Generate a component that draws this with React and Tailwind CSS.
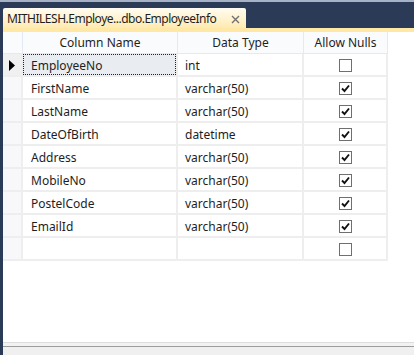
import React from "react";

const rows = [
  { name: "EmployeeNo", type: "int", nulls: false, current: true },
  { name: "FirstName", type: "varchar(50)", nulls: true },
  { name: "LastName", type: "varchar(50)", nulls: true },
  { name: "DateOfBirth", type: "datetime", nulls: true },
  { name: "Address", type: "varchar(50)", nulls: true },
  { name: "MobileNo", type: "varchar(50)", nulls: true },
  { name: "PostelCode", type: "varchar(50)", nulls: true },
  { name: "EmailId", type: "varchar(50)", nulls: true },
  { name: "", type: "", nulls: false },
];

function Check({ checked }) {
  return (
    <div className="w-[13px] h-[13px] border border-[#6f6f6f] bg-white flex items-center justify-center">
      {checked && (
        <svg width="9" height="9" viewBox="0 0 9 9">
          <path d="M1 4.5 L3.5 7 L8 1.5" fill="none" stroke="#111" strokeWidth="1.9" />
        </svg>
      )}
    </div>
  );
}

export default function App() {
  return (
    <div
      className="w-[414px] h-[355px] flex flex-col bg-white overflow-hidden text-[12px] text-[#1e1e1e]"
      style={{ fontFamily: '"Noto Sans", "Open Sans", sans-serif' }}
    >
      <div className="h-[2px] bg-[#a7b1c6]" />
      <div className="flex flex-1 min-h-0">
        <div className="w-[3px] bg-[#2b3a57]" />
        <div className="flex-1 flex flex-col min-w-0">
          <div className="h-[26px] bg-[#2b3a57] flex items-end">
            <div className="h-[20px] w-[243px] rounded-t-[2px] bg-gradient-to-b from-[#fffcf2] to-[#ffeab0] flex items-center pl-[4px] pr-[6px] justify-between">
              <span className="leading-none whitespace-nowrap tracking-[-0.5px] mt-[1px]">MITHILESH.Employe...dbo.EmployeeInfo</span>
              <svg width="9" height="9" viewBox="0 0 9 9" className="mt-[2px]">
                <path d="M1 1 L8 8 M8 1 L1 8" stroke="#707070" strokeWidth="1.4" />
              </svg>
            </div>
          </div>
          <div className="h-[4px] bg-[#ffe8a6]" />
          <div className="flex-1 bg-white">
            <div className="flex h-[22px]">
              <div className="w-[20px] bg-[#fafbfd] border-r border-b border-[#e4eaf4]" />
              <div className="w-[155px] bg-[#fafbfd] border-r border-b border-[#e4eaf4] flex items-center justify-center">Column Name</div>
              <div className="w-[126px] bg-[#fafbfd] border-r border-b border-[#e4eaf4] flex items-center justify-center">Data Type</div>
              <div className="w-[84px] bg-[#fafbfd] border-r border-b border-[#e4eaf4] flex items-center justify-center">Allow Nulls</div>
            </div>
            {rows.map((r, i) => (
              <div key={i} className="flex h-[23px]">
                <div className={`w-[20px] border-r-2 border-b-2 border-[#eeeeee] flex items-center pl-[6px] pt-[2px] ${r.current ? "bg-[#f0f0f0]" : "bg-[#f8f8fa]"}`}>
                  {r.current && (
                    <svg width="7" height="11" viewBox="0 0 7 11">
                      <path d="M0 0 L6 5.5 L0 11 Z" fill="#000" />
                    </svg>
                  )}
                </div>
                <div className={`w-[155px] border-r-2 border-b-2 border-[#eeeeee] flex items-center ${r.current ? "p-0" : "pl-[8px] pt-[2px]"}`}>
                  {r.current ? (
                    <div className="w-full h-full border border-dotted border-[#222] bg-[#e9edf1] flex items-center pl-[7px] pt-[2px]">{r.name}</div>
                  ) : (
                    r.name
                  )}
                </div>
                <div className="w-[126px] border-r-2 border-b-2 border-[#eeeeee] flex items-center pl-[7px] pt-[2px]">{r.type}</div>
                <div className="w-[84px] border-r-2 border-b-2 border-[#eeeeee] flex items-center justify-center pt-[2px]">
                  <Check checked={r.nulls} />
                </div>
              </div>
            ))}
          </div>
          <div className="h-[1px] bg-[#dddddd]" />
          <div className="h-[3px] bg-[#f2f2f2]" />
          <div className="h-[1px] bg-[#9c9c9c]" />
          <div className="h-[8px] bg-[#f0f0f0]" />
        </div>
      </div>
    </div>
  );
}
